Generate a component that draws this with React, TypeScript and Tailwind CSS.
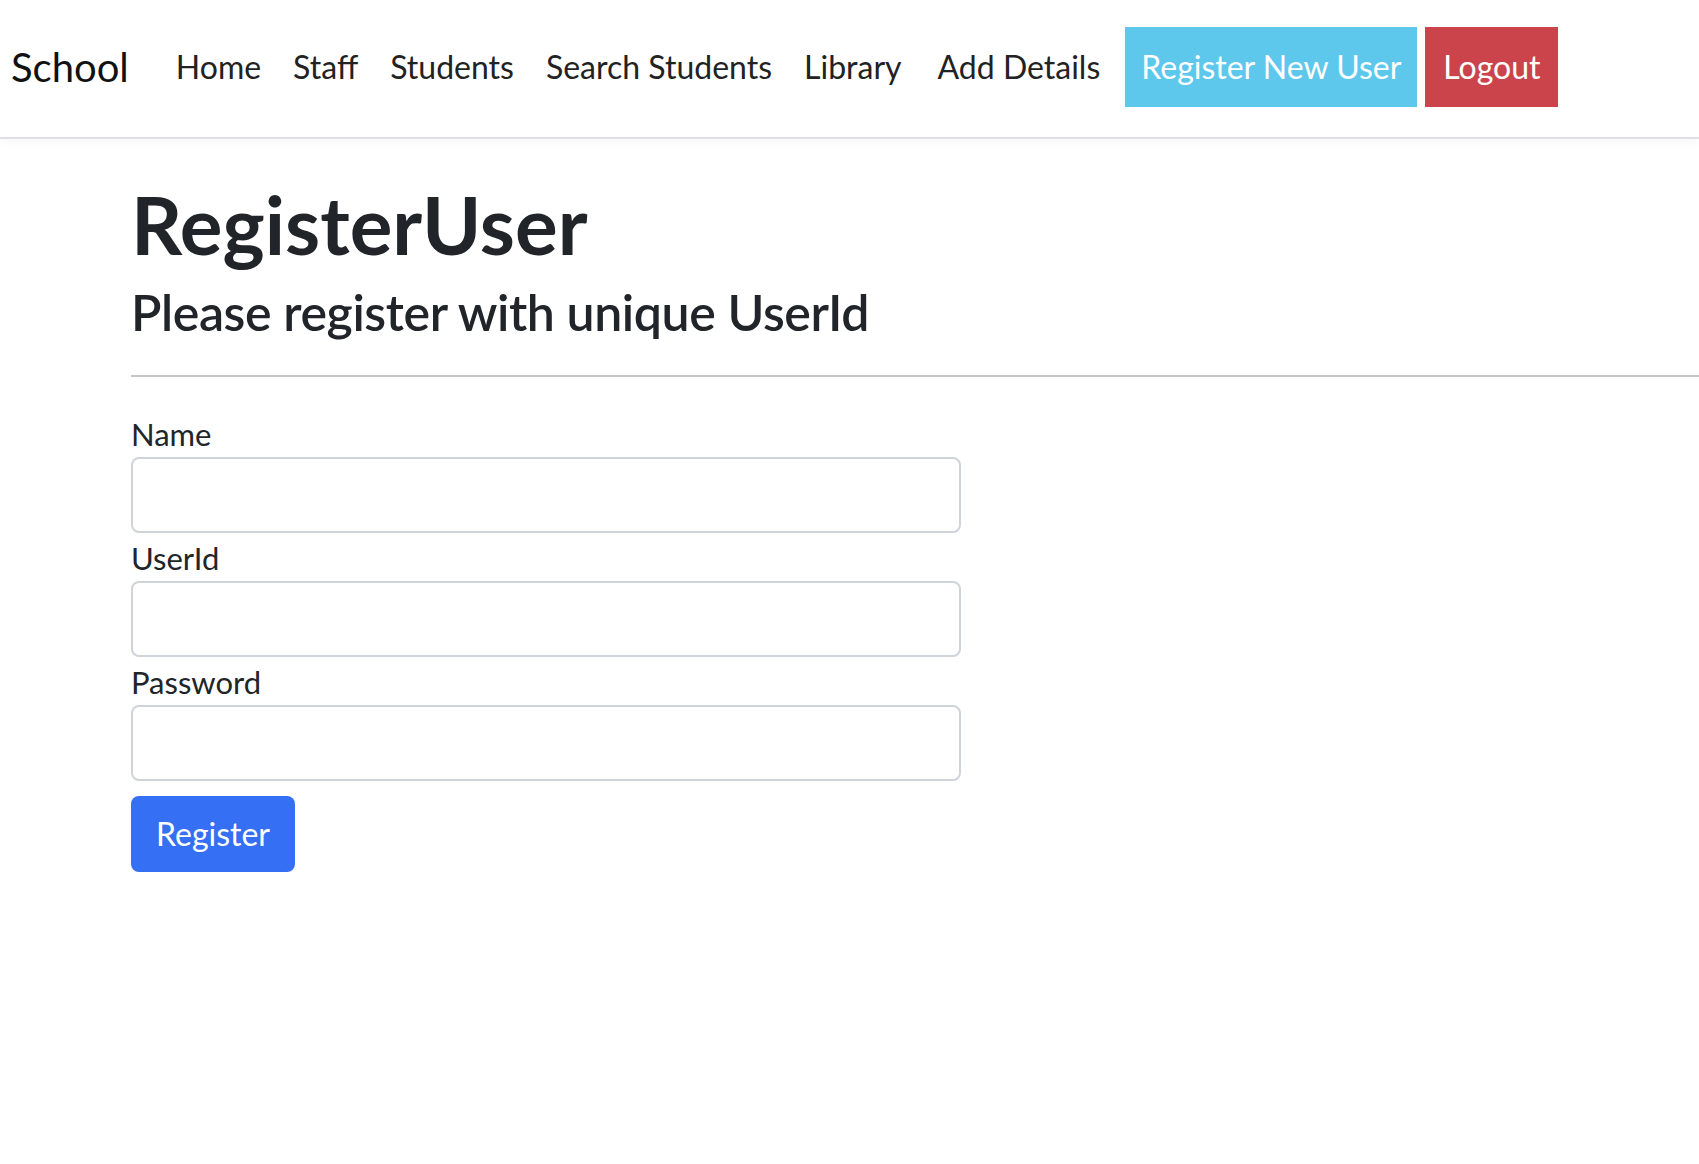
const navLinks = [
  { label: 'Home', extra: '' },
  { label: 'Staff', extra: '' },
  { label: 'Students', extra: '' },
  { label: 'Search Students', extra: '' },
  { label: 'Library', extra: 'mr-[4px]' },
  { label: 'Add Details', extra: '' },
]

const fields = ['Name', 'UserId', 'Password']

export default function App() {
  return (
    <div className="min-h-screen bg-white text-[#212529] font-['Lato',sans-serif]">
      {/* Navbar */}
      <nav className="h-[139px] pb-[4px] border-b-2 border-[#dfe0e3] shadow-[0_3px_10px_rgba(0,0,0,0.04)] flex items-center">
        <a className="ml-[11px] text-[40px] leading-none text-[#111]">School</a>
        <ul className="flex items-center ml-[31px]">
          {navLinks.map((l) => (
            <li key={l.label} className={l.extra}>
              <a className="block px-4 text-[32px] leading-none text-[#222]">{l.label}</a>
            </li>
          ))}
          <li className="ml-[9px]">
            <a className="flex items-center h-[80px] px-[16px] bg-[#5dc7ec] text-white text-[32px]">
              Register New User
            </a>
          </li>
          <li className="ml-[8px]">
            <a className="flex items-center h-[80px] px-[18px] bg-[#cc444b] text-white text-[32px]">
              Logout
            </a>
          </li>
        </ul>
      </nav>

      {/* Content */}
      <main className="pl-[131px]">
        <h1 className="mt-[37px] text-[80px] leading-[1.2] font-bold">RegisterUser</h1>
        <h3 className="mt-[9px] text-[50px] leading-[1.25] font-semibold tracking-[-0.4px]">
          Please register with unique UserId
        </h3>
        <hr className="mt-[31px] border-0 h-[2px] bg-[#c6c6c6]" />

        <form className="mt-[35px] w-[830px]">
          {fields.map((f, i) => (
            <div key={f} className={i > 0 ? 'mt-[3px]' : ''}>
              <label className="block text-[31px] leading-[45px]">{f}</label>
              <input
                type={f === 'Password' ? 'password' : 'text'}
                className="block w-full h-[76px] border-2 border-[#ced4da] rounded-[8px] px-4 text-[30px] outline-none"
              />
            </div>
          ))}
          <button
            type="button"
            className="mt-[15px] h-[76px] w-[164px] rounded-[8px] bg-[#356ff3] text-white text-[32px]"
          >
            Register
          </button>
        </form>
      </main>
    </div>
  )
}
